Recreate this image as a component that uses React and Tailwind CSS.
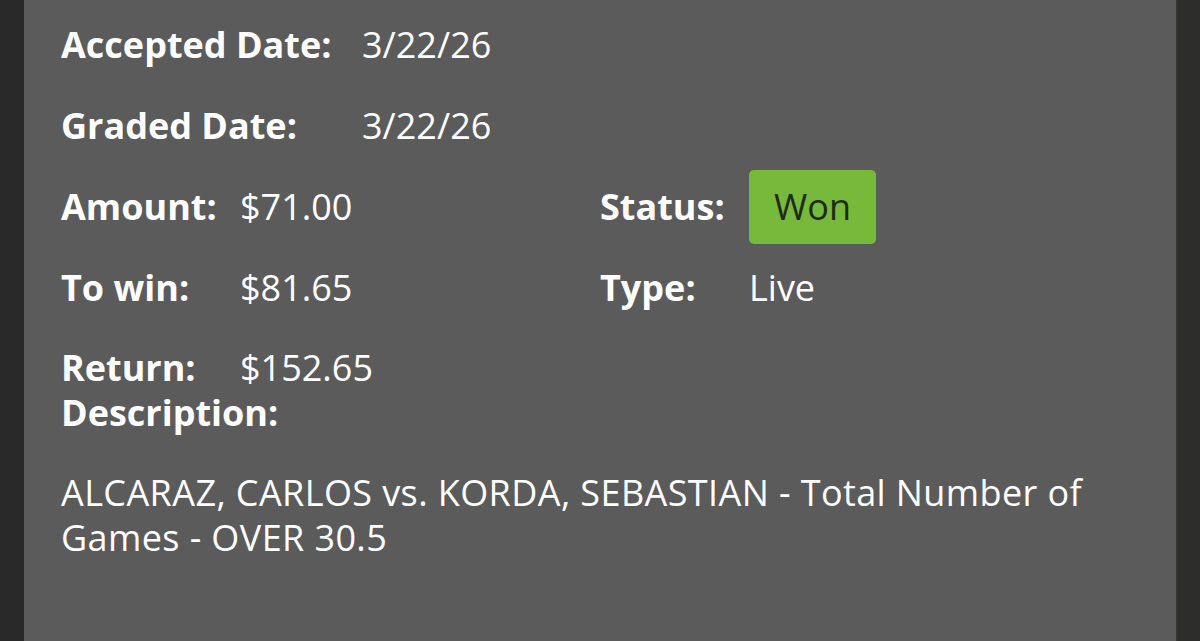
export default function App() {
  return (
    <div
      className="h-[641px] w-[1200px] flex bg-[#2b2b2a] overflow-hidden"
      style={{ fontFamily: '"Open Sans", "Noto Sans", sans-serif' }}
    >
      <div className="w-[24px] shrink-0 bg-[#292929]" />
      <div className="flex-1 bg-[#5b5b5b] pl-[37px] pt-[22px] text-white text-[36px] leading-[45px]">
        <div className="flex flex-col gap-[36px]">
          {/* dates */}
          <div className="flex h-[45px] items-center">
            <span className="w-[301px] shrink-0 font-bold">Accepted Date:</span>
            <span>3/22/26</span>
          </div>
          <div className="flex h-[45px] items-center">
            <span className="w-[301px] shrink-0 font-bold">Graded Date:</span>
            <span>3/22/26</span>
          </div>

          {/* amount + status */}
          <div className="flex h-[45px] items-center">
            <span className="w-[179px] shrink-0 font-bold">Amount:</span>
            <span className="w-[360px] shrink-0">$71.00</span>
            <span className="w-[149px] shrink-0 font-bold">Status:</span>
            <span className="flex h-[74px] w-[127px] shrink-0 items-center justify-center rounded-[5px] bg-[#76b93b] text-[#1f2a18]">
              Won
            </span>
          </div>
          <div className="flex h-[45px] items-center">
            <span className="w-[179px] shrink-0 font-bold">To win:</span>
            <span className="w-[360px] shrink-0">$81.65</span>
            <span className="w-[149px] shrink-0 font-bold">Type:</span>
            <span>Live</span>
          </div>
        </div>

        <div className="mt-[35px] flex h-[45px] items-center">
          <span className="w-[179px] shrink-0 font-bold">Return:</span>
          <span>$152.65</span>
        </div>
        <div className="font-bold">Description:</div>

        <p className="mt-[35px] w-[1100px] tracking-[0.4px]">
          ALCARAZ, CARLOS vs. KORDA, SEBASTIAN - Total Number of Games - OVER 30.5
        </p>
      </div>
      <div className="w-[2px] shrink-0 bg-[#343433]" />
      <div className="w-[22px] shrink-0 bg-[#2d2d2b]" />
    </div>
  )
}
